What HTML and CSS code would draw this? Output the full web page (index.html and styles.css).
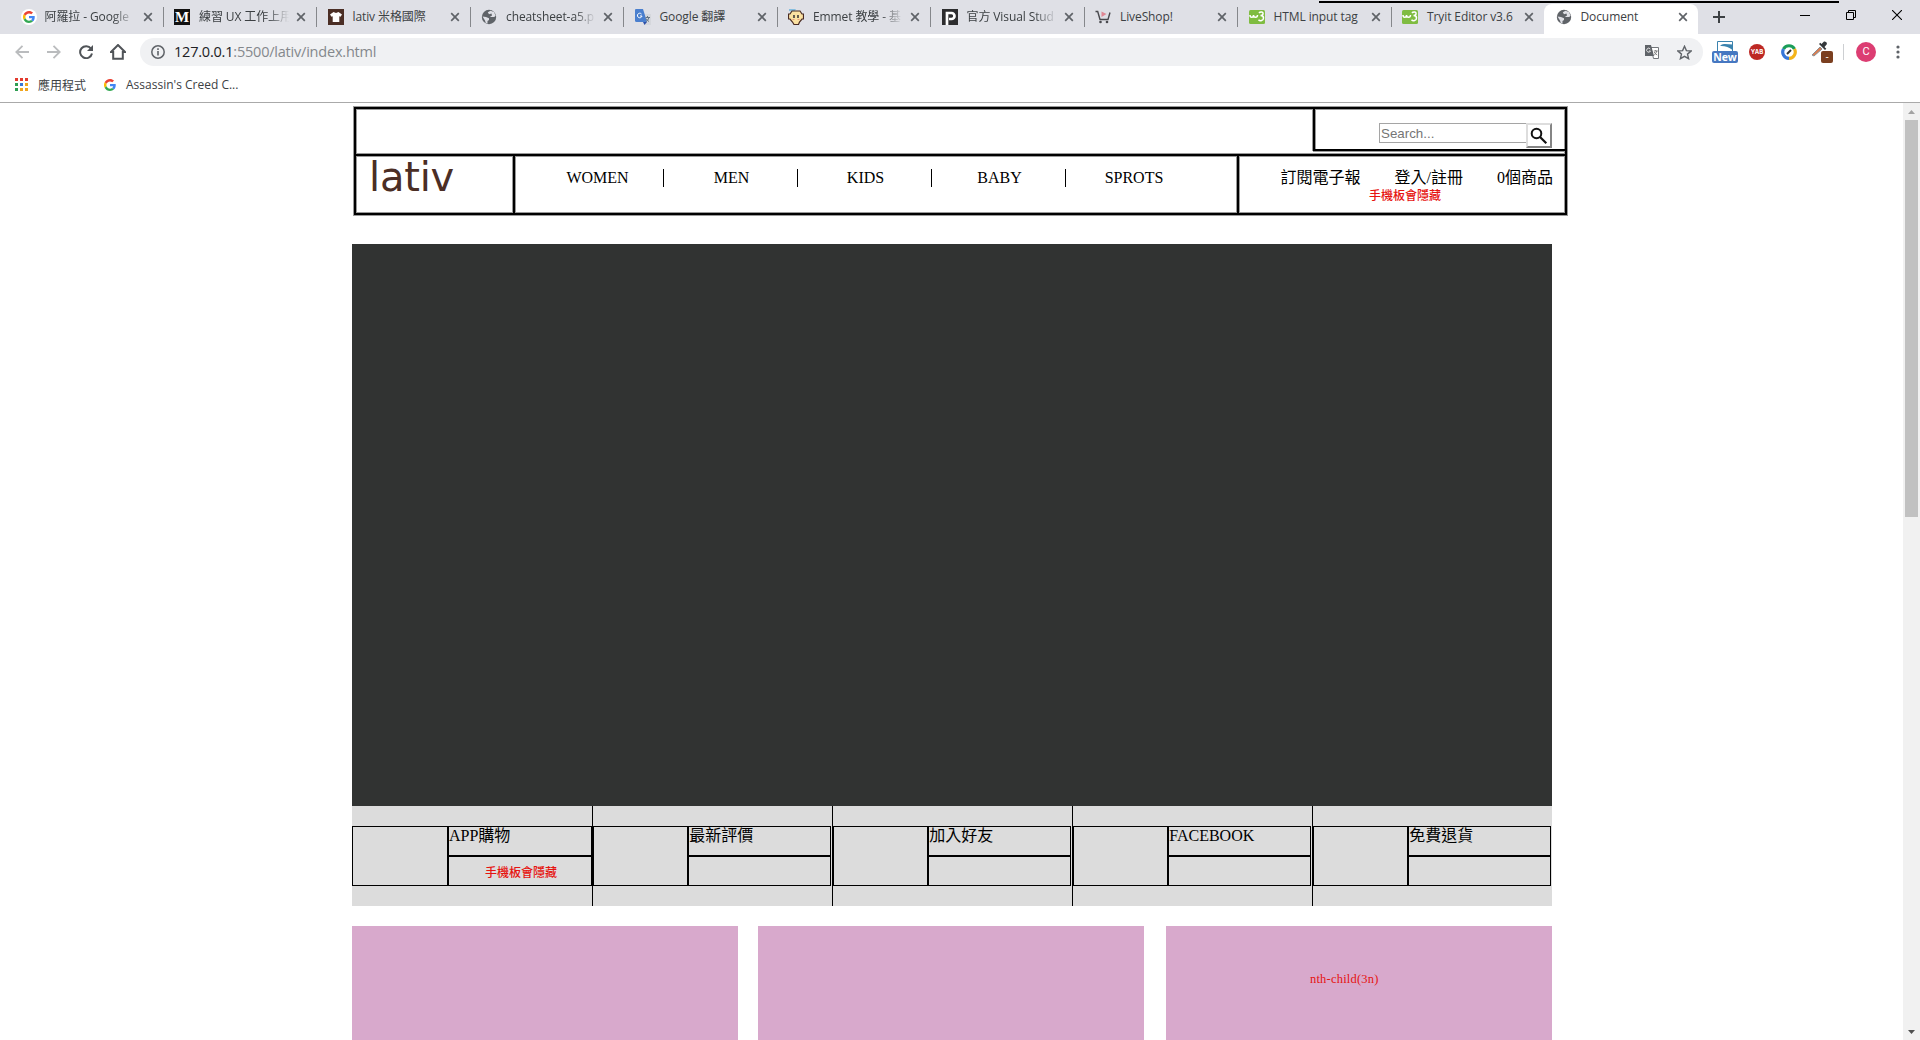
FILE: index.html
```html
<!DOCTYPE html>
<html lang="zh-Hant">
<head>
<meta charset="utf-8">
<title>Document</title>
<link rel="stylesheet" href="styles.css">
</head>
<body>
<svg class="defs" width="0" height="0">
  <symbol id="google" viewBox="0 0 48 48"><path fill="#ea4335" d="M24 9.500c3.500 0 6.700 1.200 9.200 3.600l6.900-6.900C35.900 2.400 30.500 0 24 0 14.600 0 6.500 5.400 2.600 13.200l8 6.200C12.400 13.700 17.700 9.500 24 9.500z"/><path fill="#4285f4" d="M47 24.500c0-1.600-.2-3.100-.4-4.500H24v9h12.900c-.6 3-2.200 5.500-4.700 7.200l7.700 6C44.400 38 47 31.800 47 24.500z"/><path fill="#fbbc05" d="M10.500 28.600a14.500 14.500 0 0 1 0-9.200l-8-6.200a24 24 0 0 0 0 21.600z"/><path fill="#34a853" d="M24 48c6.500 0 11.900-2.100 15.900-5.800l-7.700-6c-2.200 1.500-4.900 2.300-8.200 2.300-6.300 0-11.600-4.200-13.500-9.900l-8 6.200C6.500 42.600 14.600 48 24 48z"/></symbol>
  <symbol id="globe" viewBox="0 0 16 16"><circle cx="8" cy="8" r="7.200" fill="#5f6368"/><path d="M9.500 1.800 6.800 3.200 8 5.200l2.500-.6L11 6.500 8.800 8H13q1.200-.4 1.500-1.500L13 3zM1.500 7.500 5 8l3 1.200V11l-1.500 1v2.500L4.800 14 4 11.500z" fill="#dfe0e6"/></symbol>
  <symbol id="w3" viewBox="0 0 16 14"><rect width="16" height="14" rx="1.500" fill="#7fbc41"/><path d="M1 5c0 3 3.500 3 3.500 0 0 3 4 3 4 0M10 3c1-1.500 4.500-1.500 4 .8-.2 1.500-2 1.700-2.500 1.700 1.500 0 3 .6 3 2.500 0 2.800-3.500 3.400-5 1.700" fill="none" stroke="#fff" stroke-width="1.500"/></symbol>
  <symbol id="close" viewBox="0 0 10 10"><path d="m1.200 1.200 7.600 7.600m0-7.600L1.200 8.800" stroke="#5f6368" stroke-width="1.700"/></symbol>
</svg>
<div class="window">
  <div class="tabbar">
    <div class="tab"><span class="fav round"><svg width="12" height="12"><use href="#google"/></svg></span><span class="title fade">阿羅拉 - Google</span><svg class="x"><use href="#close"/></svg></div>
    <div class="tab"><span class="fav medium">M</span><span class="title fade">練習 UX 工作上用</span><svg class="x"><use href="#close"/></svg></div>
    <div class="tab"><span class="fav"><svg width="16" height="16"><rect width="16" height="16" fill="#4b2e25"/><path d="m5.500 3 2.500 1 2.500-1L14 5.500l-1.500 2.300-1.200-.6V13H4.700V7.200l-1.200.6L2 5.500z" fill="#fff"/></svg></span><span class="title">lativ 米格國際</span><svg class="x"><use href="#close"/></svg></div>
    <div class="tab"><span class="fav"><svg width="16" height="16"><use href="#globe"/></svg></span><span class="title fade">cheatsheet-a5.p</span><svg class="x"><use href="#close"/></svg></div>
    <div class="tab"><span class="fav"><svg width="16" height="16"><path d="M6 5h10v11h-6z" fill="#d5d7dc"/><path d="M1 0h7l4 13H1.500Q0 13 0 11.500V1q0-1 1-1z" fill="#4a7fce"/><path d="M8 13h4l-2.500 3z" fill="#2d50a8"/><path d="M6.500 5A2.300 2.300 0 1 0 7 7H5" fill="none" stroke="#fff"/><path d="M10.500 8.500h4.500M12.500 7v1.500m1.500 0q-.8 3-3 4m0-3q1 2 3 3" fill="none" stroke="#667684"/></svg></span><span class="title">Google 翻譯</span><svg class="x"><use href="#close"/></svg></div>
    <div class="tab"><span class="fav"><svg width="16" height="16"><path d="M1 0h7L6 3 1 2z" fill="#85bdde"/><path d="M4 2h8l2 3h1.500v5H14l-2.500 3-1 2.500H6L4.500 13 2 10H.5V5H2z" fill="#fbe1a1" stroke="#482a22" stroke-width="1.200"/><path d="M6 6v3m4-3v3" stroke="#28242a" stroke-width="1.400"/><path d="M4.500 10.500h2m3 0h2" stroke="#e69b7c"/></svg></span><span class="title fade">Emmet 教學 - 基</span><svg class="x"><use href="#close"/></svg></div>
    <div class="tab"><span class="fav"><svg width="16" height="16"><rect width="16" height="16" fill="#2d2d2f"/><path d="M5 16V4h4.500a2.500 2.500 0 0 1 0 6H7" fill="none" stroke="#fff" stroke-width="2.700"/></svg></span><span class="title fade">官方 Visual Stud</span><svg class="x"><use href="#close"/></svg></div>
    <div class="tab"><span class="fav"><svg width="16" height="16"><path d="M.5 2.500h2.200L5 10.500h8l2-7" fill="none" stroke="#49494e" stroke-width="1.400"/><path d="m6.500 2.500 5 2.500-5 3z" fill="#e08794"/><circle cx="5.500" cy="13" r="1.300" fill="#49494e"/><circle cx="12" cy="13" r="1.300" fill="#49494e"/></svg></span><span class="title">LiveShop!</span><svg class="x"><use href="#close"/></svg></div>
    <div class="tab"><span class="fav"><svg width="16" height="14"><use href="#w3"/></svg></span><span class="title">HTML input tag</span><svg class="x"><use href="#close"/></svg></div>
    <div class="tab"><span class="fav"><svg width="16" height="14"><use href="#w3"/></svg></span><span class="title">Tryit Editor v3.6</span><svg class="x"><use href="#close"/></svg></div>
    <div class="tab active"><span class="fav"><svg width="16" height="16"><use href="#globe"/></svg></span><span class="title">Document</span><svg class="x"><use href="#close"/></svg></div>
    <svg class="newtab" width="12" height="12"><path d="M6 0v12M0 6h12" stroke="#3c4043" stroke-width="2"/></svg>
    <div class="winctl">
      <svg width="10" height="10"><path d="M0 5.500h10" stroke="#000"/></svg>
      <svg width="10" height="10"><path d="M.5 2.500h7v7h-7zM2.500 2V.5h7v7H8" fill="none" stroke="#000"/></svg>
      <svg width="10" height="10"><path d="m0 0 10 10m0-10L0 10" stroke="#000" stroke-width="1.100"/></svg>
    </div>
    <div class="topline"></div>
  </div>

  <div class="toolbar">
    <svg width="14" height="14" class="nav-i"><path d="M14 7H1.500M7.500.8 1.300 7l6.200 6.200" fill="none" stroke="#babcbe" stroke-width="1.800"/></svg>
    <svg width="14" height="14" class="nav-i"><path d="M0 7h12.500M6.500.8 12.700 7l-6.200 6.200" fill="none" stroke="#babcbe" stroke-width="1.800"/></svg>
    <svg width="14" height="14" class="nav-i"><path d="M12 3.600A6 6 0 1 0 13 8.500" fill="none" stroke="#505458" stroke-width="2"/><path d="M14 0v6H8z" fill="#505458"/></svg>
    <svg width="16" height="16" class="nav-i home"><path d="M1 8 8 1l7 7h-2.200v6.700H3.200V8z" fill="none" stroke="#505458" stroke-width="2"/></svg>
    <div class="omnibox">
      <svg width="14" height="14"><circle cx="7" cy="7" r="6.200" fill="none" stroke="#5f6368" stroke-width="1.500"/><path d="M7 6v4.500M7 3.300v1.600" stroke="#5f6368" stroke-width="1.600"/></svg>
      <span class="url"><b>127.0.0.1</b>:5500/lativ/index.html</span>
      <svg width="14" height="14"><path d="M6 2.500h7.500v11h-5L6 3" fill="#fff" stroke="#73777b"/><path d="M0 0h6l3 11H0z" fill="#5f6368"/><path d="M5.300 4A2 2 0 1 0 5.500 6H4" fill="none" stroke="#eee" stroke-width=".9"/><path d="M8.800 6h4M10.700 5v1m1 0q-.5 3-2.500 4m0-3q1 2 3 3" fill="none" stroke="#777" stroke-width=".9"/></svg>
      <svg width="15" height="15" class="star"><path d="m7.500 1.300 1.900 4.300 4.700.4-3.600 3.100 1.100 4.600-4.100-2.400-4.100 2.400 1.100-4.600L.9 6l4.700-.4z" fill="none" stroke="#5f6368" stroke-width="1.400"/></svg>
    </div>
    <div class="exts">
      <div class="ext-new"><svg width="16" height="10"><path d="M.5 10V.5h15V10" fill="#fff" stroke="#3b83ae"/><path d="M3 5Q5 2.500 8 3l7.500.5V9Q10 4.500 3 5z" fill="#3b83ae"/></svg><span>New</span></div>
      <div class="ext-yab">YAB</div>
      <svg class="ext-ring" width="16" height="16" fill="none" stroke-width="3.200"><path d="M2.500 5A6.300 6.300 0 0 1 13.500 5" stroke="#1a9d58"/><path d="M13.500 5A6.300 6.300 0 0 1 8 14.300" stroke="#f4b41a"/><path d="M8 14.300A6.300 6.300 0 0 1 2.500 5" stroke="#3777d8"/><path d="m6 10 4-4" stroke="#333" stroke-width="2"/></svg>
      <div class="ext-pick"><svg width="22" height="22"><path d="m1 14 8-8 2 2-8 7z" fill="#dc7e51" stroke="#8b9196"/><path d="m8 3 6 6 1.300-1.300L13.500 6 16 3q0-3-3-2.500L10.500 3l-1.200-1.300z" fill="#34383b"/></svg><span>-</span></div>
      <i class="vr"></i>
      <div class="avatar">C</div>
      <svg class="more" width="4" height="14" fill="#5f6368"><circle cx="2" cy="2" r="1.600"/><circle cx="2" cy="7" r="1.600"/><circle cx="2" cy="12" r="1.600"/></svg>
    </div>
  </div>

  <div class="bookmarks">
    <div class="apps"><i></i><i></i><i></i><i></i><i></i><i></i><i></i><i></i><i></i></div>
    <span class="bm1">應用程式</span>
    <svg width="12" height="12"><use href="#google"/></svg>
    <span class="bm2">Assassin's Creed C...</span>
  </div>

  <div class="viewport">
    <div class="page">
      <header class="header">
        <div class="top">
          <div class="search">
            <input type="text" placeholder="Search...">
            <button><svg width="18" height="18"><circle cx="6.500" cy="6.500" r="4.800" fill="none" stroke="#111" stroke-width="2"/><path d="m10 10 6.300 6.300" stroke="#111" stroke-width="2.200"/></svg></button>
          </div>
        </div>
        <div class="main">
          <div class="logo">lativ</div>
          <nav class="menu"><a>WOMEN</a><a>MEN</a><a>KIDS</a><a>BABY</a><a>SPROTS</a></nav>
          <div class="account"><a>訂閱電子報</a><a>登入/註冊</a><a>0個商品</a><span class="note">手機板會隱藏</span></div>
        </div>
      </header>
      <div class="hero"></div>
      <div class="services">
        <div class="service"><div class="pic"></div><div class="txt"><p>APP購物</p><p><span class="note">手機板會隱藏</span></p></div></div>
        <div class="service"><div class="pic"></div><div class="txt"><p>最新評價</p><p></p></div></div>
        <div class="service"><div class="pic"></div><div class="txt"><p>加入好友</p><p></p></div></div>
        <div class="service"><div class="pic"></div><div class="txt"><p>FACEBOOK</p><p></p></div></div>
        <div class="service"><div class="pic"></div><div class="txt"><p>免費退貨</p><p></p></div></div>
      </div>
      <div class="cards"><div class="card"></div><div class="card"></div><div class="card"><span class="note">nth-child(3n)</span></div></div>
    </div>
    <div class="scrollbar">
      <svg width="17" height="17"><path d="m5 11 3.500-4 3.500 4z" fill="#a3a3a3"/></svg>
      <div class="thumb"></div>
      <svg class="down" width="17" height="17"><path d="m5 7 3.500 4L12 7z" fill="#505050"/></svg>
    </div>
  </div>
</div>
</body>
</html>
```
FILE: styles.css
```css
* { box-sizing: border-box; }
body { margin: 0; background: #fff; overflow: hidden; }
svg { display: block; flex: none; }
.defs { position: absolute; }
.window { width: 1920px; height: 1040px; display: flex; flex-direction: column; font-family: "Open Sans", "Noto Sans CJK TC", sans-serif; font-size: 12px; color: #3c4043; }

/* tab strip */
.tabbar { position: relative; flex: none; height: 34px; background: #dfe0e6; display: flex; align-items: center; padding-left: 9px; }
.tab { position: relative; width: 153.500px; height: 34px; flex: none; display: flex; align-items: center; padding-left: 11.500px; }
.tab::after { content: ""; position: absolute; right: -1px; top: 7px; width: 1px; height: 20px; background: #85878b; }
.tab:nth-child(10)::after, .tab.active::after { display: none; }
.fav { width: 16px; height: 16px; display: flex; align-items: center; justify-content: center; flex: none; }
.round { background: #fff; border-radius: 50%; }
.medium { background: #111; color: #fff; font: bold 15px/16px "Liberation Serif", serif; }
.title { width: 94px; margin-left: 9px; white-space: nowrap; line-height: 18px; letter-spacing: -.1px; }
.fade { -webkit-mask-image: linear-gradient(90deg, #000 72%, transparent 96%); mask-image: linear-gradient(90deg, #000 72%, transparent 96%); }
.x { width: 10px; height: 10px; margin-left: 3px; }
.tab:first-child .title { margin-left: 8px; margin-right: 1px; }
.active { height: 30px; align-self: flex-end; background: #fff; border-radius: 8px 8px 0 0; padding-bottom: 4px; }
.newtab { margin-left: 15px; }
.winctl { margin-left: auto; display: flex; gap: 36px; padding: 0 18px 5px 0; }
.topline { position: absolute; left: 1319px; top: 1px; width: 520px; height: 2px; background: #000; }

/* toolbar */
.toolbar { flex: none; height: 36px; display: flex; align-items: center; padding-left: 15px; }
.nav-i { margin-right: 18px; }
.nav-i.home { margin: 0 14px 0 -1px; }
.omnibox { width: 1563px; height: 28px; border-radius: 14px; background: #f0f1f3; display: flex; align-items: center; padding: 0 11px; }
.url { margin: 0 auto 1px 9px; font-size: 14.500px; color: #84888c; letter-spacing: -.21px; }
.url b { font-weight: 400; color: #202124; }
.star { margin-left: 18px; }
.exts { display: flex; align-items: center; height: 36px; }
.ext-new { width: 26px; height: 22px; margin-left: 9px; display: flex; flex-direction: column; align-items: center; }
.ext-new span { width: 26px; height: 12px; border-radius: 2px; background: #4677c1; color: #fff; font: bold 10.500px/12px "Open Sans", sans-serif; text-align: center; }
.ext-yab { width: 16px; height: 16px; margin-left: 11px; border-radius: 50%; background: #bd2824; color: #fff; font: bold 6px/16px Inter, sans-serif; text-align: center; }
.ext-ring { margin-left: 16px; }
.ext-pick { position: relative; width: 22px; height: 22px; margin: 0 2px 0 14px; }
.ext-pick span { position: absolute; right: 0; bottom: 0; width: 12px; height: 12px; border-radius: 2px; background: #7b3f20; color: #fff; font-size: 10px; line-height: 11px; text-align: center; }
.vr { width: 1px; height: 16px; margin-left: 8px; background: #cdcfd2; }
.avatar { width: 20px; height: 20px; margin-left: 12px; border-radius: 50%; background: #dc3d72; color: #fff; font: 11px/20px Roboto, sans-serif; text-align: center; }
.more { margin-left: 20px; }

/* bookmarks */
.bookmarks { flex: none; height: 33px; border-bottom: 1px solid #aaa; display: flex; align-items: center; padding: 0 0 3px 15px; }
.apps { display: grid; grid-template-columns: repeat(3, 3px); gap: 2px; }
.apps i { width: 3px; height: 3px; background: #f0a51e; }
.apps i:nth-child(-n+3) { background: #e33b2e; }
.apps i:nth-child(4), .apps i:nth-child(7) { background: #2f9e53; }
.apps i:nth-child(5) { background: #3777d8; }
.bm1 { margin: 0 18px 0 10px; }
.bm2 { margin-left: 10px; }

/* page */
.viewport { flex: 1; min-height: 0; display: flex; justify-content: space-between; overflow: hidden; font-family: "Liberation Serif", "Noto Sans CJK TC", serif; font-size: 16px; color: #000; }
.page { width: 1215px; margin-left: 352px; padding-top: 4px; }
.header { width: 1213px; height: 108px; margin-left: 2px; border: 2px solid #000; box-shadow: 0 0 0 1px #999, inset 0 0 0 1px #999; }
.top { height: 47px; display: flex; justify-content: flex-end; border-bottom: 2px solid #000; box-shadow: 0 1px #999, inset 0 -1px #999; }
.search { width: 252px; height: 42px; border: solid #000; border-width: 0 0 2px 2px; box-shadow: -1px 0 #999, 0 1px #999, inset 1px 0 #999; display: flex; align-items: flex-start; padding: 14px 0 0 64px; }
.search input { width: 147px; height: 20px; border: 1px solid #a5a5a5; border-right: 0; padding: 0 1px; font: 13.333px "Liberation Sans", sans-serif; }
.search input::placeholder { color: #757575; }
.search button { width: 26px; height: 25px; padding: 0; background: #fff; border: 2px solid; border-color: #ddd #858585 #858585 #ddd; display: flex; align-items: center; justify-content: center; }
.main { height: 57px; display: flex; }
.logo { width: 159px; border-right: 2px solid #000; box-shadow: 1px 0 #999, inset -1px 0 #999; padding-left: 13px; font: 40px/43px "DejaVu Sans", sans-serif; letter-spacing: -.2px; color: #4b2e25; }
.menu { width: 722px; padding: 13px 0 0 15px; display: flex; }
.menu a { width: 134px; height: 18px; padding-left: 2px; line-height: 17px; text-align: center; border-right: 1px solid #000; }
.menu a:last-child { border: 0; }
.account { position: relative; flex: 1; border-left: 2px solid #000; box-shadow: -1px 0 #999, inset 1px 0 #999; display: flex; justify-content: flex-end; gap: 34px; padding: 11px 12px 0 0; line-height: 22px; }
.note { font: 500 12px/16px "Liberation Serif", "Noto Sans CJK TC", serif; color: #e61410; white-space: nowrap; }
.account .note { position: absolute; left: 130px; top: 32px; }
.hero { width: 1200px; height: 562px; margin-top: 29px; background: #313332; }
.services { width: 1200px; height: 100px; display: flex; background: #dcdcdc; }
.service { width: 240px; padding: 20px 1px 20px 0; border-left: 1px solid #000; display: flex; }
.service:first-child { border: 0; padding-right: 0; }
.pic { width: 40%; border: 1px solid #000; }
.txt { width: 60%; }
.txt p { height: 30px; margin: 0; border: 1px solid #000; line-height: 18px; }
.txt .note { display: block; text-align: center; padding: 8px 0 0 2px; }
.cards { width: 1200px; height: 300px; margin-top: 20px; display: flex; }
.card { width: 386px; background: #d8a9cc; margin-right: 20px; }
.card:last-child { margin: 0 0 0 2px; padding: 43px 0 0 144px; }
.card .note { font-family: "Liberation Serif", serif; font-weight: 400; font-size: 12.500px; letter-spacing: .2px; }

.scrollbar { width: 17px; background: #f1f1f1; display: flex; flex-direction: column; }
.thumb { width: 13px; height: 397px; margin: 0 auto; background: #c1c1c1; }
.down { margin-top: auto; }
```
